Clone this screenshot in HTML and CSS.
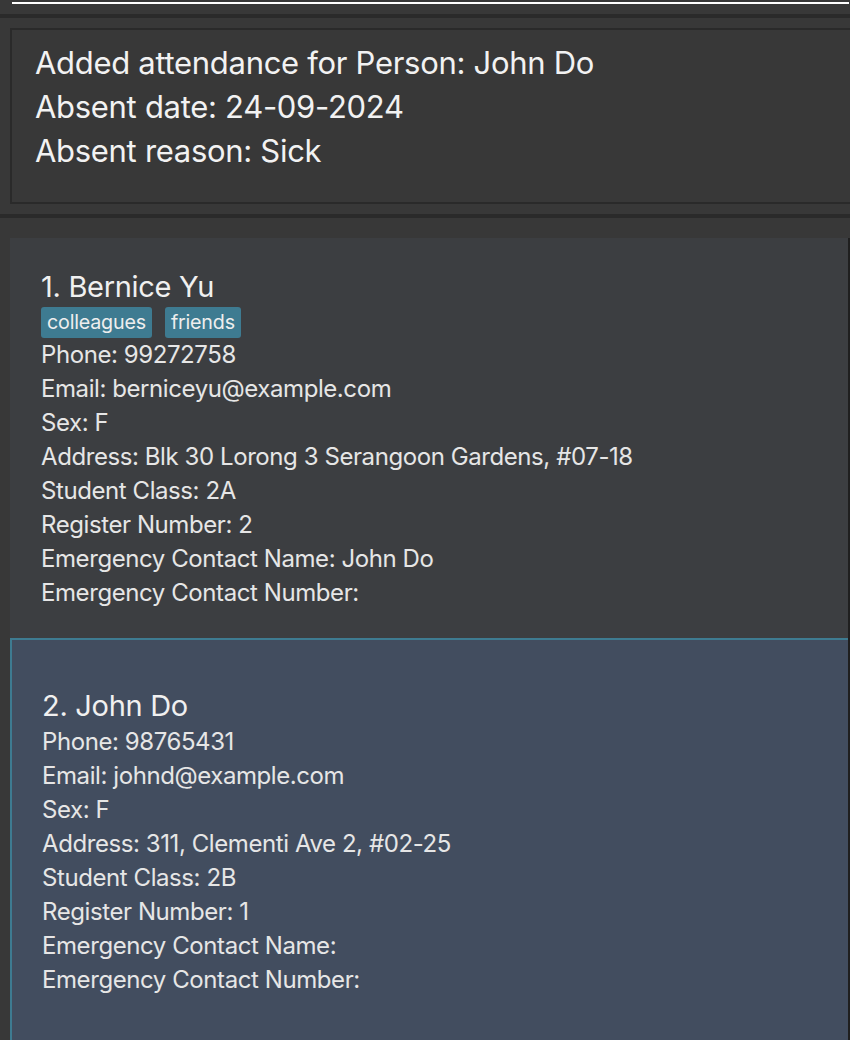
FILE: index.html
```html
<!DOCTYPE html>
<html>
<head>
<meta charset="utf-8">
<link rel="stylesheet" href="styles.css">
</head>
<body>
<div class="app">
  <div class="command-area">
    <div class="command-line"></div>
  </div>
  <div class="divider"></div>
  <div class="result-area">
    <div class="result-box">
      <div class="result-line">Added attendance for Person: John Do</div>
      <div class="result-line">Absent date: 24-09-2024</div>
      <div class="result-line">Absent reason: Sick</div>
    </div>
  </div>
  <div class="divider"></div>
  <div class="list-area">
    <div class="list">
      <div class="card">
        <div class="name">1. Bernice Yu</div>
        <div class="tags">
          <span class="tag">colleagues</span>
          <span class="tag">friends</span>
        </div>
        <div class="field">Phone: 99272758</div>
        <div class="field">Email: berniceyu@example.com</div>
        <div class="field">Sex: F</div>
        <div class="field">Address: Blk 30 Lorong 3 Serangoon Gardens, #07-18</div>
        <div class="field">Student Class: 2A</div>
        <div class="field">Register Number: 2</div>
        <div class="field">Emergency Contact Name: John Do</div>
        <div class="field">Emergency Contact Number:</div>
      </div>
      <div class="card selected">
        <div class="name">2. John Do</div>
        <div class="field">Phone: 98765431</div>
        <div class="field">Email: johnd@example.com</div>
        <div class="field">Sex: F</div>
        <div class="field">Address: 311, Clementi Ave 2, #02-25</div>
        <div class="field">Student Class: 2B</div>
        <div class="field">Register Number: 1</div>
        <div class="field">Emergency Contact Name:</div>
        <div class="field">Emergency Contact Number:</div>
      </div>
    </div>
    <div class="scroll-edge"></div>
  </div>
</div>
</body>
</html>
```

FILE: styles.css
```css
html, body {
  margin: 0;
  padding: 0;
  background: #383838;
  height: 100%;
  overflow: hidden;
}

body {
  font-family: Inter, "Noto Sans", "Liberation Sans", sans-serif;
  color: #eeeeee;
}

.app {
  display: flex;
  flex-direction: column;
  width: 850px;
  height: 1040px;
}

.command-area {
  height: 14px;
  padding-left: 12px;
  padding-top: 2px;
  box-sizing: border-box;
}

.command-line {
  height: 2px;
  background: #ffffff;
  margin-right: 1px;
}

.divider {
  height: 4px;
  background: #2a2a2a;
}

.result-area {
  padding: 10px 0 10px 10px;
}

.result-box {
  border: 2px solid #2a2a2a;
  border-right: none;
  padding: 11px 0 0 23px;
  height: 161px;
}

.result-line {
  font-size: 31px;
  line-height: 44px;
  color: #f2f2f2;
  letter-spacing: -0.3px;
  white-space: nowrap;
}

.list-area {
  flex: 1;
  display: flex;
  padding: 20px 0 0 10px;
  min-height: 0;
}

.list {
  flex: 1;
  display: flex;
  flex-direction: column;
}

.scroll-edge {
  width: 2px;
  background: #1f1f1f;
}

.card {
  background: #3c3e41;
  padding: 32px 0 28px 31px;
  display: flex;
  flex-direction: column;
}

.card.selected {
  background: #424d5f;
  border: 2px solid #3e7b91;
  border-right: none;
  border-bottom: none;
  padding: 49px 0 0 30px;
  flex: 1;
}

.name {
  font-size: 29px;
  line-height: 34px;
  color: #f0f0f0;
  letter-spacing: -0.3px;
  margin-bottom: 2px;
}

.tags {
  display: flex;
  gap: 13px;
  height: 32px;
  align-items: center;
}

.tag {
  background: #3e7b91;
  color: #eeeeee;
  font-size: 19.7px;
  line-height: 31px;
  padding: 0 6px;
  border-radius: 3px;
  letter-spacing: -0.2px;
}

.field {
  font-size: 24px;
  line-height: 34px;
  color: #e6e6e6;
  letter-spacing: -0.42px;
  white-space: nowrap;
}
```
